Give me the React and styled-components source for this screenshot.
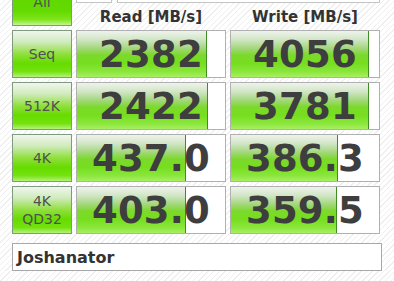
import React from "react";
import styled, { createGlobalStyle, css } from "styled-components";

const GlobalStyle = createGlobalStyle`
  html, body {
    margin: 0;
    padding: 0;
    overflow: hidden;
  }
  body {
    background-color: #ffffff;
    background-image: repeating-linear-gradient(
      135deg,
      #ffffff 0px,
      #ffffff 3px,
      #efefef 3px,
      #efefef 4px
    );
    font-family: "DejaVu Sans", Verdana, sans-serif;
  }
`;

const Board = styled.div`
  display: grid;
  grid-template-columns: 60px 150px 150px;
  grid-template-rows: 25px 19px repeat(4, 48px);
  column-gap: 4px;
  row-gap: 4px;
  margin-top: -22px;
  padding-left: 12px;
`;

const TestButton = styled.div`
  box-sizing: border-box;
  border: 1px solid #7f9a7f;
  display: flex;
  flex-direction: column;
  align-items: center;
  justify-content: center;
  font-size: 14px;
  line-height: 18px;
  color: #505050;
  background: linear-gradient(
    to bottom,
    #f1f6ef 0%,
    #cdeab8 25%,
    #8fdf3c 50%,
    #66dc00 70%,
    #74e20e 88%,
    #b4f27a 100%
  );

  ${(p) =>
    p.$all &&
    css`
      grid-row: span 2;
      background: linear-gradient(
        to bottom,
        #5ed800 0%,
        #63da00 70%,
        #7fe51c 88%,
        #c2f590 100%
      );
    `}
`;

const Selectors = styled.div`
  grid-column: 2 / 4;
  display: flex;
  gap: 5px;
`;

const Select = styled.div`
  box-sizing: border-box;
  background: #fff;
  border: 1px solid #c4c4c4;
  width: ${(p) => (p.$w ? `${p.$w}px` : "auto")};
  flex: ${(p) => (p.$w ? "none" : "1")};
`;

const Heading = styled.div`
  display: flex;
  align-items: center;
  justify-content: center;
  font-size: 15px;
  font-weight: bold;
  color: #333333;
`;

const BAR = `linear-gradient(
  to bottom,
  #eef3ec 0%,
  #d3e6c8 18%,
  #a2d77a 38%,
  #7cd92c 52%,
  #76de1e 70%,
  #8ae63c 88%,
  #a8ee62 100%
)`;

const ValueCell = styled.div`
  box-sizing: border-box;
  border: 1px solid #b0b0b0;
  display: flex;
  align-items: center;
  justify-content: center;
  font-size: 37px;
  font-weight: bold;
  color: #3e3e3e;
  letter-spacing: 0.2px;
  background-color: #fff;
  background-image: linear-gradient(#3f8c22, #3f8c22), ${BAR};
  background-repeat: no-repeat;
  background-size: 1px 100%, ${(p) => p.$fill}px 100%;
  background-position: ${(p) => p.$fill - 1}px 0, 0 0;
`;

const NameBox = styled.div`
  box-sizing: border-box;
  width: 370px;
  height: 28px;
  margin: 9px 0 0 12px;
  background: #fff;
  border: 1px solid #a8a8a8;
  padding-left: 4px;
  display: flex;
  align-items: center;
  font-size: 16px;
  font-weight: bold;
  color: #333333;
`;

const rows = [
  { label: ["Seq"], read: "2382", readFill: 130, write: "4056", writeFill: 138 },
  { label: ["512K"], read: "2422", readFill: 131, write: "3781", writeFill: 138 },
  { label: ["4K"], read: "437.0", readFill: 109, write: "386.3", writeFill: 107 },
  { label: ["4K", "QD32"], read: "403.0", readFill: 109, write: "359.5", writeFill: 106 },
];

const App = () => (
  <>
    <GlobalStyle />
    <Board>
      <TestButton $all>All</TestButton>
      <Selectors>
        <Select $w={36} />
        <Select />
      </Selectors>
      <Heading>Read [MB/s]</Heading>
      <Heading>Write [MB/s]</Heading>
      {rows.map((r) => (
        <React.Fragment key={r.label.join("")}>
          <TestButton>
            {r.label.map((l) => (
              <span key={l}>{l}</span>
            ))}
          </TestButton>
          <ValueCell $fill={r.readFill}>{r.read}</ValueCell>
          <ValueCell $fill={r.writeFill}>{r.write}</ValueCell>
        </React.Fragment>
      ))}
    </Board>
    <NameBox>Joshanator</NameBox>
  </>
);

export default App;
